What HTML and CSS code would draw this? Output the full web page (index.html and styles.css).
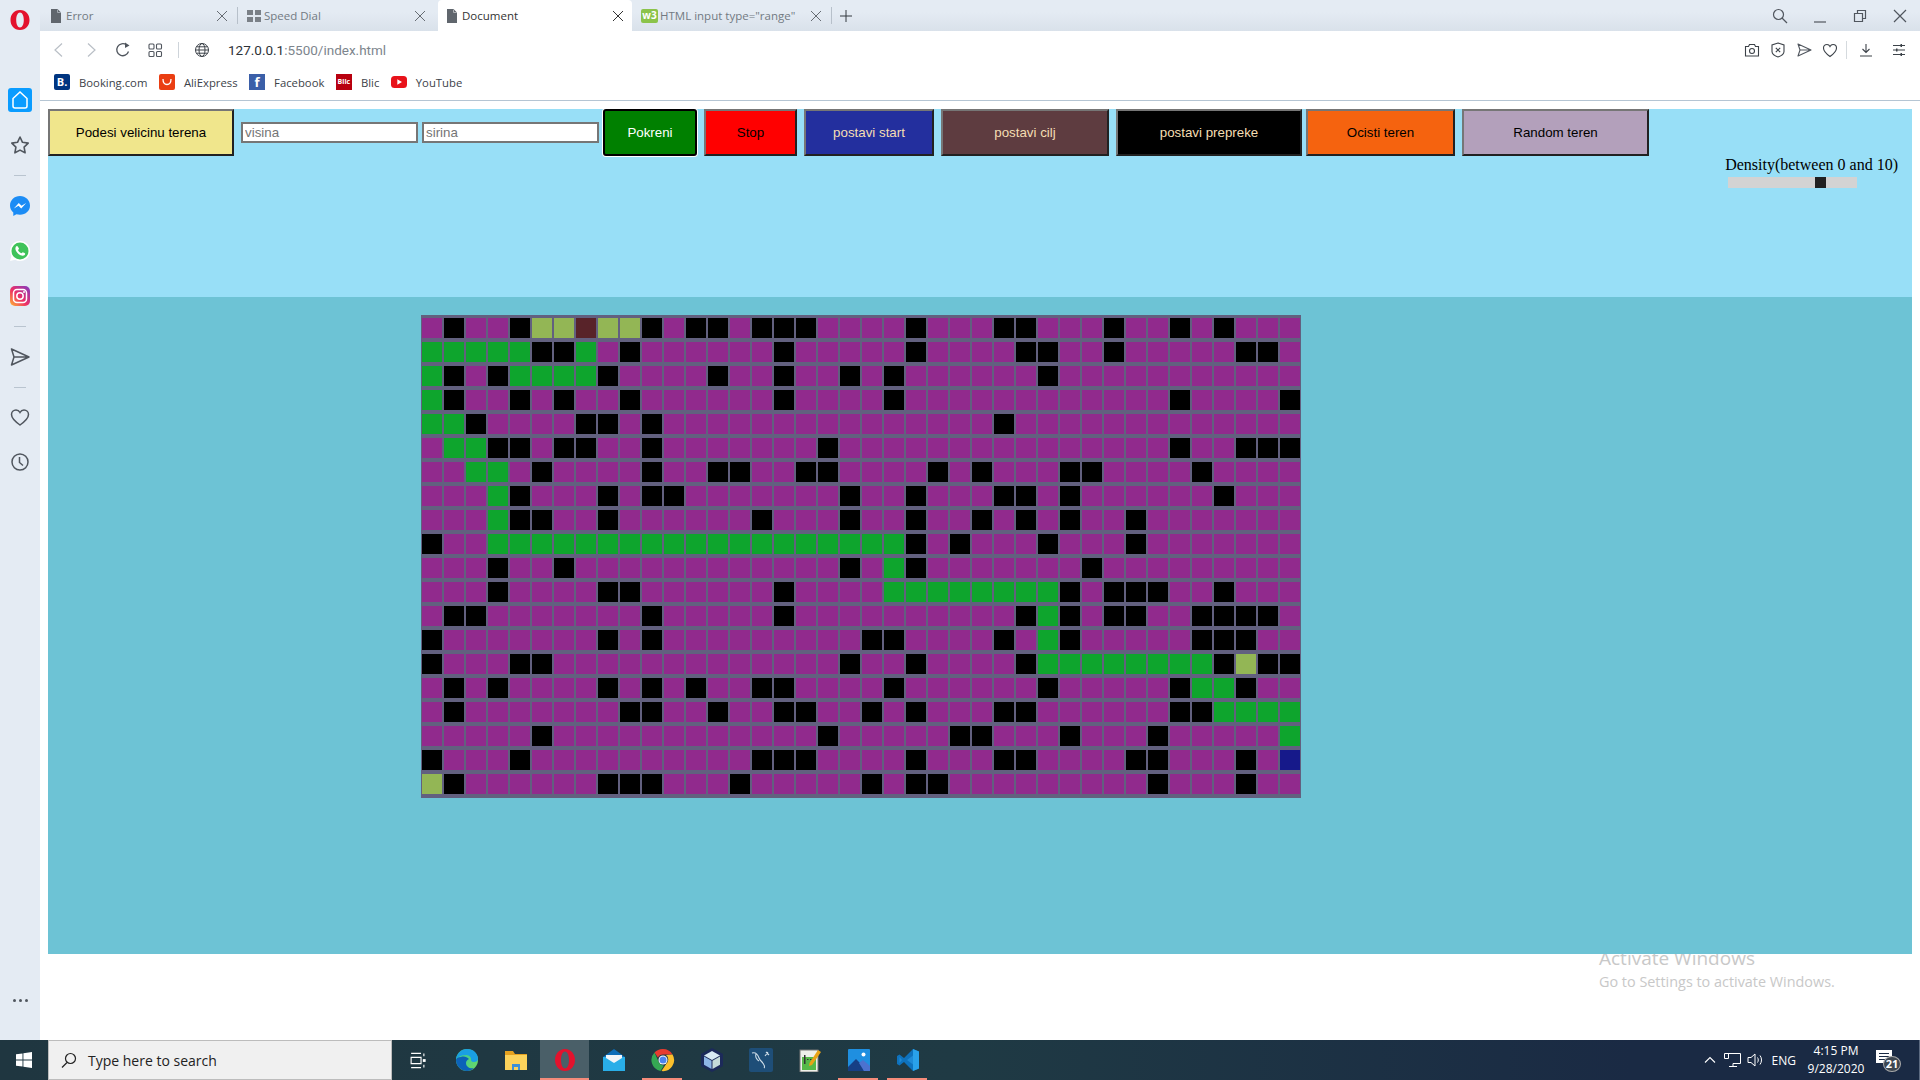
FILE: index.html
```html
<!DOCTYPE html>
<html lang="en">
<head>
  <meta charset="UTF-8">
  <meta name="viewport" content="width=device-width, initial-scale=1.0">
  <title>Document</title>
  <link rel="stylesheet" href="styles.css">
</head>
<body>
  <div class="window">
    <aside class="sidebar">
      <svg class="side-logo" viewBox="0 0 24 24"><path fill="#e3122d" fill-rule="evenodd" d="M12 2C6 2 2.500 6.500 2.500 12S6 22 12 22s9.500-4.500 9.500-10S18 2 12 2zm0 2.500c2.300 0 3.800 3.300 3.800 7.500s-1.500 7.500-3.800 7.500S8.200 16.200 8.200 12 9.700 4.500 12 4.500z"/></svg>
      <div class="side-home"><svg viewBox="0 0 24 24"><path fill="none" stroke="#fff" stroke-width="1.500" d="M5 10.500 12 4l7 6.500V18a2 2 0 0 1-2 2H7a2 2 0 0 1-2-2z"/></svg></div>
      <svg class="side-icon star" viewBox="0 0 24 24"><path fill="none" stroke="#50565e" stroke-width="1.600" stroke-linejoin="round" d="m12 4 2.500 5.300 5.700.8-4.100 4 1 5.700-5.100-2.700-5.100 2.700 1-5.700-4.100-4 5.700-.8z"/></svg>
      <span class="side-sep"></span>
      <svg class="side-icon" viewBox="0 0 24 24"><path fill="#1b8cf5" d="M12 2C6.300 2 2 6.200 2 11.500c0 2.900 1.300 5.300 3.300 7V22l3.100-1.700c1.100.3 2.300.5 3.600.5 5.700 0 10-4.100 10-9.300S17.700 2 12 2z"/><path fill="#fff" d="m5.800 14.500 5-5.400 2.700 2.700 4.700-2.700-5 5.400-2.700-2.700z"/></svg>
      <svg class="side-icon" viewBox="0 0 24 24"><path fill="#fff" d="M12 2a10 10 0 0 0-8.600 15L2 22l5.200-1.300A10 10 0 1 0 12 2z"/><circle cx="12" cy="12" r="8.500" fill="#3fc35a"/><path fill="#fff" d="M9 7c-.5 0-1.600.8-1.600 2.500 0 3 3.800 7.200 7.300 7.200 1.700 0 2.500-1.200 2.500-2 0-.4-2.200-1.500-2.500-1.500s-.8 1-1.200 1c-1 0-3.400-2.300-3.400-3.200 0-.4.900-.9.900-1.300S9.500 7 9 7z"/></svg>
      <svg class="side-icon" viewBox="0 0 24 24"><defs><linearGradient id="insta" x1="0" y1="1" x2="1" y2="0"><stop offset="0" stop-color="#fdb833"/><stop offset=".45" stop-color="#ee2f65"/><stop offset="1" stop-color="#7d3cc4"/></linearGradient></defs><rect x="2" y="2" width="20" height="20" rx="5" fill="url(#insta)"/><rect x="5.500" y="5.500" width="13" height="13" rx="3.500" fill="none" stroke="#fff" stroke-width="1.500"/><circle cx="12" cy="12" r="3.200" fill="none" stroke="#fff" stroke-width="1.500"/><circle cx="16" cy="8" r="1" fill="#fff"/></svg>
      <span class="side-sep"></span>
      <svg class="side-icon" viewBox="0 0 24 24"><path fill="none" stroke="#50565e" stroke-width="1.500" stroke-linejoin="round" d="M3.500 4 21 12 3.500 20l2.500-8zM6 12h15"/></svg>
      <span class="side-sep"></span>
      <svg class="side-icon heart" viewBox="0 0 24 24"><path fill="none" stroke="#50565e" stroke-width="1.500" d="M12 20C5 15 3.500 12 3.500 9.500 3.500 7 5.500 5 8 5c1.700 0 3.200 1 4 2.500C12.800 6 14.300 5 16 5c2.500 0 4.500 2 4.500 4.500 0 2.500-1.500 5.500-8.500 10.500z"/></svg>
      <svg class="side-icon clock" viewBox="0 0 24 24"><circle cx="12" cy="12" r="8" fill="none" stroke="#50565e" stroke-width="1.500"/><path fill="none" stroke="#50565e" stroke-width="1.500" d="M11.500 7v5.500l3.500 3"/></svg>
      <div class="side-dots"><span></span><span></span><span></span></div>
    </aside>

    <div class="browser">
      <div class="tabstrip">
        <div class="tab tab-sep">
          <svg class="tab-icon" viewBox="0 0 12 14"><path fill="#60666d" d="M1 0h6.500L11 3.500V14H1z"/><path fill="#e4ebf3" d="M7.500 .8v3h3v-.5H8V.8z"/></svg>
          <span class="tab-title">Error</span>
          <svg class="tab-close" viewBox="0 0 12 12"><path stroke="#666c73" fill="none" d="m1 1 10 10M11 1 1 11"/></svg>
        </div>
        <div class="tab">
          <svg class="tab-icon" viewBox="0 0 14 14"><path fill="#7a8087" d="M0 1h6v5H0zM8 1h6v5H8zM0 8h6v5H0zM8 8h6v5H8z"/></svg>
          <span class="tab-title">Speed Dial</span>
          <svg class="tab-close" viewBox="0 0 12 12"><path stroke="#666c73" fill="none" d="m1 1 10 10M11 1 1 11"/></svg>
        </div>
        <div class="tab tab-active">
          <svg class="tab-icon" viewBox="0 0 12 14"><path fill="#60666d" d="M1 0h6.500L11 3.500V14H1z"/><path fill="#fff" d="M7.500 .8v3h3v-.5H8V.8z"/></svg>
          <span class="tab-title">Document</span>
          <svg class="tab-close" viewBox="0 0 12 12"><path stroke="#333" fill="none" d="m1 1 10 10M11 1 1 11"/></svg>
        </div>
        <div class="tab tab-last tab-sep">
          <span class="w3-icon">w3</span>
          <span class="tab-title">HTML input type="range"</span>
          <svg class="tab-close" viewBox="0 0 12 12"><path stroke="#666c73" fill="none" d="m1 1 10 10M11 1 1 11"/></svg>
        </div>
        <svg class="tab-plus" viewBox="0 0 12 12"><path stroke="#33383e" fill="none" d="M6 0v12M0 6h12"/></svg>
        <div class="win-controls">
          <svg viewBox="0 0 16 16"><circle cx="6.500" cy="6.500" r="5" fill="none" stroke="#50565e" stroke-width="1.200"/><path stroke="#50565e" stroke-width="1.200" d="m10 10 5 5"/></svg>
          <svg viewBox="0 0 16 16"><path stroke="#50565e" stroke-width="1.200" d="M2 14h12"/></svg>
          <svg viewBox="0 0 16 16"><path fill="none" stroke="#50565e" stroke-width="1.200" d="M2.500 5.500h8v8h-8zM5.500 5.500v-3h8v8h-3"/></svg>
          <svg viewBox="0 0 16 16"><path stroke="#50565e" stroke-width="1.200" d="m2 2 12 12M14 2 2 14"/></svg>
        </div>
      </div>

      <div class="addressbar">
        <svg class="nav-icon nav-back" viewBox="0 0 16 16"><path fill="none" stroke="#b9bfc6" stroke-width="1.200" d="M11 1.500 4 8l7 6.500"/></svg>
        <svg class="nav-icon" viewBox="0 0 16 16"><path fill="none" stroke="#b9bfc6" stroke-width="1.200" d="m5 1.500 7 6.500-7 6.500"/></svg>
        <svg class="nav-icon" viewBox="0 0 16 16"><path fill="none" stroke="#50565e" stroke-width="1.300" d="M13.500 9.500A6 6 0 1 1 11.500 3"/><path fill="#50565e" d="M10 .5l4.500 3-4.500 2.500z"/></svg>
        <svg class="nav-icon" viewBox="0 0 16 16"><g fill="none" stroke="#50565e" stroke-width="1.100"><rect x="2" y="2" width="5" height="5" rx="1"/><rect x="9.500" y="2" width="5" height="5" rx="1"/><rect x="2" y="9.500" width="5" height="5" rx="1"/><rect x="9.500" y="9.500" width="5" height="5" rx="1"/></g></svg>
        <span class="addr-sep"></span>
        <svg class="globe" viewBox="0 0 16 16"><g fill="none" stroke="#3c4249" stroke-width="1"><circle cx="8" cy="8" r="6.500"/><ellipse cx="8" cy="8" rx="3" ry="6.500"/><path d="M1.500 8h13M2.500 4.800h11M2.500 11.200h11"/></g></svg>
        <span class="url"><b>127.0.0.1</b>:5500/index.html</span>
        <div class="addr-tools">
          <svg viewBox="0 0 16 16"><g fill="none" stroke="#3c4249" stroke-width="1.100"><path d="M1.500 4.500h3l1-2h5l1 2h3v9.500h-13z"/><circle cx="8" cy="9" r="2.500"/></g></svg>
          <svg viewBox="0 0 16 16"><g fill="none" stroke="#3c4249" stroke-width="1.100"><path d="M8 1 14 3v6.500c0 2.500-3 4.500-6 5.500-3-1-6-3-6-5.500V3z"/><path d="m5.800 5.800 4.400 4.400M10.200 5.800l-4.400 4.400"/></g></svg>
          <svg viewBox="0 0 16 16"><path fill="none" stroke="#50565e" stroke-width="1.100" stroke-linejoin="round" d="M2 2 15 8 2 14l2-6zM4 8h11"/></svg>
          <svg viewBox="0 0 16 16"><path fill="none" stroke="#3c4249" stroke-width="1.100" d="M8 14.500C3 11 1.500 8.500 1.500 6 1.500 4 3 2.500 5 2.500c1.300 0 2.400.8 3 2 .6-1.200 1.700-2 3-2 2 0 3.500 1.500 3.500 3.500 0 2.500-1.500 5-6.500 8.500z"/></svg>
          <span class="tool-sep"></span>
          <svg class="tool-dl" viewBox="0 0 16 16"><path fill="none" stroke="#3c4249" stroke-width="1.100" d="M8 2v8.500M4.500 7 8 10.500 11.500 7M2 14h12"/></svg>
          <svg class="tool-easy" viewBox="0 0 16 16"><path fill="none" stroke="#3c4249" stroke-width="1.100" d="M2 3.500h12M2 8h12M2 12.500h12"/><path fill="#3c4249" d="M9.500 2h1.500v3H9.500zM5 6.500h1.500v3H5zM9.500 11h1.500v3H9.500z"/></svg>
        </div>
      </div>

      <div class="bookmarks">
        <a class="mark"><span class="mark-icon booking">B.</span>Booking.com</a>
        <a class="mark"><svg class="mark-icon" viewBox="0 0 16 16"><rect width="16" height="16" rx="2" fill="#ea3e12"/><path fill="none" stroke="#fff" stroke-width="1.300" d="M4 5c0 3.500 1.800 5.500 4 5.500S12 8.500 12 5"/></svg>AliExpress</a>
        <a class="mark"><span class="mark-icon facebook">f</span>Facebook</a>
        <a class="mark"><span class="mark-icon blic">Blic</span>Blic</a>
        <a class="mark"><svg class="mark-icon" viewBox="0 0 16 16"><rect y="2" width="16" height="12" rx="3.500" fill="#e8121a"/><path fill="#fff" d="m6.300 5.300 4.700 2.700-4.700 2.700z"/></svg>YouTube</a>
      </div>

      <main class="page">
        <section class="controls">
          <div class="toolbar">
            <button class="btn btn-size">Podesi velicinu terena</button>
            <input class="size-input size-first" type="text" placeholder="visina">
            <input class="size-input" type="text" placeholder="sirina">
            <button class="btn btn-run">Pokreni</button>
            <button class="btn btn-stop">Stop</button>
            <button class="btn btn-start">postavi start</button>
            <button class="btn btn-goal">postavi cilj</button>
            <button class="btn btn-walls">postavi prepreke</button>
            <button class="btn btn-clear">Ocisti teren</button>
            <button class="btn btn-random">Random teren</button>
          </div>
          <div class="density">
            <label for="density">Density(between 0 and 10)</label>
            <input id="density" class="density-range" type="range" min="0" max="10" step="0.1" value="7.4">
          </div>
        </section>
        <section class="field">
          <div id="board" class="board"></div>
        </section>
      </main>

      <div class="activate">
        <p class="activate-title">Activate Windows</p>
        <p class="activate-sub">Go to Settings to activate Windows.</p>
      </div>
    </div>
  </div>

  <footer class="taskbar">
    <div class="start"><svg viewBox="0 0 16 16"><path fill="#fff" d="M0 2.300 6.500 1.400v6.200H0zM7.400 1.300 16 0v7.600H7.400zM0 8.400h6.500v6.200L0 13.700zM7.400 8.400H16V16l-8.600-1.300z"/></svg></div>
    <div class="search">
      <svg viewBox="0 0 16 16"><circle cx="9.500" cy="6.500" r="5" fill="none" stroke="#222" stroke-width="1.200"/><path stroke="#222" stroke-width="1.200" d="M6 10.500 1 15.500"/></svg>
      <span>Type here to search</span>
    </div>
    <div class="task-apps">
      <div class="task-app task-view"><svg viewBox="0 0 24 24"><path fill="none" stroke="#fff" stroke-width="1.600" d="M3 2h14M3 22h14M3 7.500h14v9H3zM21 2v4M21 18v4"/><path fill="#fff" d="M19.500 10h4v4h-4z"/></svg></div>
      <div class="task-app"><svg viewBox="0 0 24 24"><defs><linearGradient id="edge" x1="0" y1="0" x2="1" y2="1"><stop offset="0" stop-color="#2fc5a8"/><stop offset="1" stop-color="#6fdc5f"/></linearGradient></defs><circle cx="12" cy="12" r="11" fill="url(#edge)"/><path fill="#0c62b8" d="M1 12c0 6 5 11 11 11 3 0 5-1 7-3-4 1-8-1-8-5 0-2 1-3 3-4-2-2-5-3-8-2-3 0-5 1-5 3z"/><path fill="#1a9fe3" d="M1 11C2 5 7 1 12 1c6 0 11 4 11 10 0 2-2 3-4 3-3 0-3-2-3-3 0-2-2-4-5-4-5 0-8 2-10 4z"/></svg></div>
      <div class="task-app"><svg viewBox="0 0 24 24"><path fill="#e5a11f" d="M1 3h8l2 3h12v3H1z"/><path fill="#fbd25b" d="M1 7h22v15H1z"/><path fill="#3b8fd8" d="M8 16h8v6h-2v-3h-4v3H8z"/></svg></div>
      <div class="task-app task-current task-open"><svg viewBox="0 0 24 24"><path fill="#e3122d" fill-rule="evenodd" d="M12 1C6 1 2 6 2 12s4 11 10 11 10-5 10-11S18 1 12 1zm0 2.500c2.500 0 4 3.800 4 8.500s-1.500 8.500-4 8.500-4-3.800-4-8.500 1.500-8.500 4-8.500z"/></svg></div>
      <div class="task-app"><svg viewBox="0 0 24 24"><path fill="#0d6db8" d="M12 1 1 9h22z"/><path fill="#29aee8" d="M1 9h22v14H1z"/><path fill="#f2f5f8" d="M4 7h16v3l-8 5-8-5z"/></svg></div>
      <div class="task-app task-open"><svg viewBox="0 0 24 24"><path fill="#e53c30" d="M12 1a11 11 0 0 1 9.500 5.500H12a5.500 5.500 0 0 0-5 3.200L3.500 4.500A11 11 0 0 1 12 1z"/><path fill="#35a853" d="M3.500 4.500 8.200 15a5.500 5.500 0 0 0 4.800 2.400L9.500 22.900A11 11 0 0 1 3.500 4.500z"/><path fill="#fbc02c" d="M21.500 6.500A11 11 0 0 1 10.500 23L15.500 15.500A5.500 5.500 0 0 0 15 7z"/><circle cx="12" cy="12" r="4.500" fill="#fff"/><circle cx="12" cy="12" r="3.500" fill="#4b84f1"/></svg></div>
      <div class="task-app"><svg viewBox="0 0 24 24"><path fill="#1c2a5a" d="M12 0 23 6v12l-11 6-11-6V6z"/><path fill="#d8eaf3" d="M12 3l8 4.500-8 4.500-8-4.500z"/><path fill="#8eb6e6" d="M4 8.500l7.500 4.300V21L4 16.700z"/><path fill="#c5dbd8" d="m20 8.500-7.500 4.300V21l7.500-4.300z"/></svg></div>
      <div class="task-app"><svg viewBox="0 0 24 24"><rect width="24" height="24" rx="2" fill="#1e4e78"/><path fill="none" stroke="#cfdde8" stroke-width="1.100" d="M3 5c4-1 6 2 7 5s4 4 5 7c1 2 0 3 0 3M7 6c-1 3 1 6 3 7M16 8l3-4M17 4l3 3"/></svg></div>
      <div class="task-app"><svg viewBox="0 0 24 24"><rect x="2" y="2" width="18" height="22" fill="#eef0ea" stroke="#777"/><rect x="4" y="9" width="14" height="13" fill="#56b948"/><path fill="#333" d="M6 7h1.500v9H6zM9 11h1.500v1H9zM12 11h1.500v1H12z"/><path fill="#e8a317" d="m20 2 3 2-9 13-3 1 .5-3z"/></svg></div>
      <div class="task-app task-open"><svg viewBox="0 0 24 24"><rect x="1" y="1" width="22" height="22" rx="1" fill="#1f8fe0"/><path fill="#163f85" d="M1 23v-4l8-8 6 6 2 6z"/><path fill="#4c72cf" d="m12 15 4-3 7 6v5h-6z"/><circle cx="16.500" cy="6.500" r="2" fill="#fff"/></svg></div>
      <div class="task-app task-open"><svg viewBox="0 0 24 24"><path fill="#0e72bd" d="M17 1 8 10 3.500 6.500 1 8v8l2.500 1.500L8 14l9 9 6-2.500V3.500z"/><path fill="#29a1ea" d="M17 1l6 2.500v17L17 23z"/><path fill="#1e8ad6" d="M17 7.500 11 12l6 4.500zM3.500 9v6L6 12z"/></svg></div>
    </div>
    <div class="tray">
      <svg class="tray-chevron" viewBox="0 0 14 14"><path fill="none" stroke="#fff" stroke-width="1.100" d="m2 9.500 5-5 5 5"/></svg>
      <svg class="tray-net" viewBox="0 0 18 16"><path fill="none" stroke="#fff" d="M.5 1.500h16v10H9v3h4M9 14.500H5M.5 1.500v5h4v-5"/></svg>
      <svg class="tray-sound" viewBox="0 0 18 16"><path fill="none" stroke="#fff" d="M1 5.500h3l4-3.500v12l-4-3.500H1zM10.500 5.500c1 1.500 1 3.500 0 5M13 3.500c2 2.500 2 6.500 0 9"/></svg>
      <span class="tray-lang">ENG</span>
      <div class="tray-clock"><span>4:15 PM</span><span>9/28/2020</span></div>
      <div class="tray-notify">
        <svg viewBox="0 0 16 14"><path fill="#fff" d="M0 0h16v13H0z"/><path stroke="#1a2a44" d="M3 3.500h10M3 6.500h10M3 9.500h6"/></svg>
        <span class="notify-badge">21</span>
      </div>
    </div>
  </footer>

  <script src="script.js"></script>
</body>
</html>
```

FILE: styles.css
```css
* {
  box-sizing: border-box;
}
body {
  margin: 0;
  width: 1920px;
  height: 1080px;
  overflow: hidden;
  background-color: #fff;
  font-family: "Open Sans", sans-serif;
}
svg {
  display: block;
  flex: none;
}
.window {
  display: flex;
  height: 1040px;
}

/* opera sidebar */
.sidebar {
  width: 40px;
  flex: none;
  display: flex;
  flex-direction: column;
  align-items: center;
  background-color: #e4ebf3;
}
.side-logo {
  width: 24px;
  height: 24px;
  margin-top: 8px;
}
.side-home {
  width: 24px;
  height: 24px;
  margin-top: 56px;
  background-color: #0a9cff;
  border-radius: 3px;
}
.side-home svg {
  width: 24px;
  height: 24px;
}
.side-icon {
  width: 24px;
  height: 24px;
  margin-top: 18px;
}
.side-icon + .side-icon {
  margin-top: 21px;
}
.star {
  margin-top: 21px;
}
.heart {
  margin-top: 17px;
}
.side-icon.clock {
  margin-top: 21px;
}
.side-sep {
  width: 12px;
  height: 1px;
  margin-top: 18px;
  background-color: #b9c4cf;
}
.side-dots {
  display: flex;
  gap: 3px;
  margin-top: auto;
  margin-bottom: 38px;
}
.side-dots span {
  width: 3px;
  height: 3px;
  border-radius: 50%;
  background-color: #50565e;
}

/* browser chrome */
.browser {
  flex: 1;
  min-width: 0;
  display: flex;
  flex-direction: column;
  position: relative;
}
.tabstrip {
  display: flex;
  align-items: center;
  height: 31px;
  background: linear-gradient(#e4ebf3 40%, #d9e1ea);
}
.tab {
  display: flex;
  align-items: center;
  width: 198px;
  height: 31px;
  padding: 0 10px 0 9px;
  font-size: 11.5px;
  color: #727a82;
}
.tab-sep {
  position: relative;
}
.tab-sep::after {
  content: "";
  position: absolute;
  right: 0;
  top: 7px;
  width: 1px;
  height: 17px;
  background-color: #b7c0ca;
}
.tab-active {
  width: 194px;
  margin-left: 2px;
  padding-left: 7px;
  padding-right: 8px;
  color: #333;
  background-color: #fff;
  border-radius: 4px 4px 0 0;
}
.tab-last {
  margin-left: 2px;
  padding-left: 7px;
  padding-right: 10px;
}
.tab-icon {
  width: 14px;
  height: 14px;
  margin-right: 3px;
}
.w3-icon {
  width: 17px;
  height: 14px;
  margin-right: 2px;
  flex: none;
  background-color: #8bc34a;
  border-radius: 2px;
  color: #fff;
  font-size: 10px;
  font-weight: 700;
  line-height: 13px;
  text-align: center;
}
.tab-title {
  flex: 1;
  white-space: nowrap;
}
.tab-close {
  width: 12px;
  height: 12px;
}
.tab-plus {
  width: 12px;
  height: 12px;
  margin-left: 8px;
}
.win-controls {
  display: flex;
  gap: 24px;
  margin-left: auto;
  margin-right: 12px;
}
.win-controls svg {
  width: 16px;
  height: 16px;
}
.addressbar {
  display: flex;
  align-items: center;
  height: 37px;
  padding-left: 11px;
  background-color: #fff;
}
.nav-icon {
  width: 16px;
  height: 16px;
  margin-right: 16px;
}
.addr-sep {
  width: 1px;
  height: 16px;
  margin: 0 15px 0 -1px;
  background-color: #ced4da;
}
.globe {
  width: 16px;
  height: 16px;
  margin-right: 18px;
}
.url {
  font-family: Roboto, sans-serif;
  font-size: 13.500px;
  color: #7d858d;
  white-space: nowrap;
}
.url b {
  font-weight: 400;
  color: #2d3238;
}
.addr-tools {
  display: flex;
  align-items: center;
  gap: 10px;
  margin-left: auto;
  margin-right: 13px;
}
.addr-tools svg {
  width: 16px;
  height: 16px;
}
.tool-sep {
  width: 1px;
  height: 18px;
  margin-left: -2px;
  background-color: #d5dade;
}
.addr-tools .tool-dl {
  margin-left: 1px;
}
.addr-tools .tool-easy {
  margin-left: 7px;
}
.bookmarks {
  display: flex;
  align-items: center;
  gap: 11.500px;
  height: 33px;
  padding: 0 0 4px 14px;
  background-color: #fff;
  border-bottom: 1px solid #b5c5d3;
  font-size: 11.300px;
  color: #3c4249;
}
.mark {
  display: flex;
  align-items: center;
  gap: 9px;
}
.mark-icon {
  width: 16px;
  height: 16px;
  flex: none;
}
.booking {
  background-color: #003580;
  border-radius: 2px;
  color: #fff;
  font-size: 11px;
  font-weight: 700;
  line-height: 16px;
  text-align: center;
}
.facebook {
  background-color: #3b5fa8;
  color: #fff;
  font-size: 13px;
  font-weight: 700;
  line-height: 16px;
  text-align: center;
}
.blic {
  background-color: #b8000f;
  color: #fff;
  font-size: 7px;
  font-weight: 700;
  line-height: 16px;
  text-align: center;
}

/* the page itself */
.page {
  padding: 8px 8px 0;
}
.controls {
  display: flex;
  align-items: flex-start;
  height: 188px;
  background-color: #98dff7;
}
.toolbar {
  display: flex;
  align-items: center;
  height: 47px;
}
.btn {
  height: 47px;
  margin-right: 7px;
  padding: 0;
  border: 2px solid;
  border-color: #767676 #212121 #212121 #767676;
  font-family: "Liberation Sans", Arial, sans-serif;
  font-size: 13.333px;
}
.btn-size {
  width: 186px;
  background-color: #f0e68c;
  color: #000;
}
.size-input {
  width: 177px;
  height: 21px;
  margin-right: 4px;
  padding: 1px 2px;
  border: 2px solid #767676;
  background-color: #fff;
  font-family: "Liberation Sans", Arial, sans-serif;
  font-size: 13.333px;
}
.btn-run {
  width: 94px;
  background-color: #008000;
  color: #fff;
  border-color: #000;
  border-radius: 3px;
  box-shadow: 0 0 0 1px #fff;
}
.btn-stop {
  width: 93px;
  background-color: #f00;
  color: #000;
}
.btn-start {
  width: 130px;
  background-color: #232f9e;
  color: #f5deb3;
}
.btn-goal {
  width: 168px;
  background-color: #5e3c40;
  color: #f5deb3;
}
.btn-walls {
  width: 186px;
  margin-right: 4px;
  background-color: #000;
  color: #f5deb3;
}
.btn-clear {
  width: 149px;
  background-color: #f5630f;
  color: #000;
}
.btn-random {
  width: 187px;
  margin-right: 0;
  background-color: #b3a0bb;
  color: #000;
}
.density {
  margin-left: auto;
  margin-right: 14px;
  padding-top: 47px;
  font-family: "Liberation Serif", "Times New Roman", serif;
  font-size: 16px;
  line-height: 18px;
  color: #000;
}
.density label {
  display: block;
}
.density-range {
  -webkit-appearance: none;
  appearance: none;
  display: block;
  width: 129px;
  height: 11px;
  margin: 3px 0 0 3px;
  background-color: #d3d3d3;
  outline: none;
}
.density-range::-webkit-slider-thumb {
  -webkit-appearance: none;
  width: 11px;
  height: 11px;
  background-color: #212121;
}
.field {
  height: 657px;
  padding: 18px 0 0 373px;
  background-color: #6dc3d5;
}
.board {
  width: 880px;
  height: 483px;
  padding: 1px 0 2px;
  display: grid;
  grid-template-columns: repeat(40, 22px);
  grid-auto-rows: 24px;
  background-color: #62607f;
}
.cell {
  margin: 2px 1px;
  background-color: #912a8d;
}
.cell-wall {
  background-color: #000;
}
.cell-path {
  background-color: #0ea52d;
}
.cell-seen {
  background-color: #93b655;
}
.cell-goal {
  background-color: #582329;
}
.cell-start {
  background-color: #16198a;
}

/* windows bits */
.activate {
  position: absolute;
  left: 1559px;
  top: 945px;
  z-index: -1;
  color: #c8c8c8;
}
.activate p {
  margin: 0;
  white-space: nowrap;
}
.activate-title {
  font-size: 19px;
  line-height: 27px;
}
.activate-sub {
  font-size: 14.400px;
  line-height: 19px;
}
.taskbar {
  display: flex;
  height: 40px;
  background: linear-gradient(90deg, #1f3640, #1f3a44 50%, #1a2a44 85%);
  color: #fff;
}
.start {
  width: 48px;
  display: flex;
  align-items: center;
  justify-content: center;
}
.start svg {
  width: 16px;
  height: 16px;
}
.search {
  display: flex;
  align-items: center;
  gap: 11px;
  width: 344px;
  padding-left: 12px;
  background-color: #f0f0f0;
  border: 1px solid #bcbcbc;
  font-size: 14px;
  color: #222;
}
.search svg {
  width: 16px;
  height: 16px;
}
.task-apps {
  display: flex;
  padding-left: 1px;
}
.task-app {
  width: 49px;
  height: 40px;
  display: flex;
  align-items: center;
  justify-content: center;
  position: relative;
}
.task-app svg {
  width: 24px;
  height: 24px;
}
.task-app.task-view svg {
  width: 17px;
  height: 17px;
}
.task-open::after {
  content: "";
  position: absolute;
  left: 4px;
  right: 5px;
  bottom: 0;
  height: 2px;
  background-color: #f58b7a;
}
.task-current {
  background-color: #4a5f68;
}
.task-current::after {
  left: 0;
  right: 0;
}
.tray {
  display: flex;
  align-items: center;
  margin-left: auto;
  padding-right: 17px;
  border-right: 1px solid #5c6a80;
  font-size: 12px;
}
.tray-chevron {
  width: 14px;
  height: 14px;
}
.tray-net {
  width: 18px;
  height: 16px;
  margin-left: 7px;
}
.tray-sound {
  width: 18px;
  height: 16px;
  margin-left: 5px;
}
.tray-lang {
  margin-left: 7px;
}
.tray-clock {
  display: flex;
  flex-direction: column;
  align-items: center;
  margin-left: 10px;
  line-height: 18px;
  width: 60px;
}
.tray-notify {
  position: relative;
  width: 26px;
  height: 24px;
  margin-left: 10px;
}
.tray-notify svg {
  width: 16px;
  height: 14px;
  margin-top: 2px;
}
.notify-badge {
  position: absolute;
  left: 7px;
  top: 8px;
  width: 18px;
  height: 16px;
  border-radius: 50%;
  background-color: #3d4650;
  border: 1px solid #aaa;
  font-size: 11px;
  font-weight: 700;
  line-height: 14px;
  text-align: center;
}
```

FILE: script.js
```js
// . free   # wall   G path   Y visited   M goal   B start
const rows = [
  ".#..#YYMYY#.##.###....#...##...#..#.#...",
  "GGGGG##G.#......#.....#....##..#.....##.",
  "G#.#GGGG#....#..#..#.#......#...........",
  "G#..#.#..#......#....#............#....#",
  "GG#....##.#...............#.............",
  ".GG##.##..#.......#...............#..###",
  "..GG.#....#..##..##....#.#...##....#....",
  "...G#...#.##.......#..#...##.#......#...",
  "...G##..#......#...#..#..#.#.#..#.......",
  "#..GGGGGGGGGGGGGGGGGGG#.#...#...#.......",
  "...#..#............#.G#.......#.........",
  "...#....##......#....GGGGGGGG#.###..#...",
  ".##.......#.....#..........#G#.##..####.",
  "#.......#.#.........##....#.G#.....###..",
  "#...##.............#..#....#GGGGGGGG#Y##",
  ".#.#....#.#.#..##....#......#.....#GG#..",
  ".#.......##..#..##..#.#...##......##GGGG",
  ".....#............#.....##...#...#.....G",
  "#...#..........###....#...##....##...#.B",
  "Y#......###...#.....#.##.........#...#.."
];

const cellClass = { "#": "cell-wall", G: "cell-path", Y: "cell-seen", M: "cell-goal", B: "cell-start" };
const board = document.getElementById("board");

rows.forEach(function (row) {
  for (const ch of row) {
    const cell = document.createElement("div");
    cell.className = "cell";
    if (cellClass[ch]) cell.classList.add(cellClass[ch]);
    board.appendChild(cell);
  }
});
```
